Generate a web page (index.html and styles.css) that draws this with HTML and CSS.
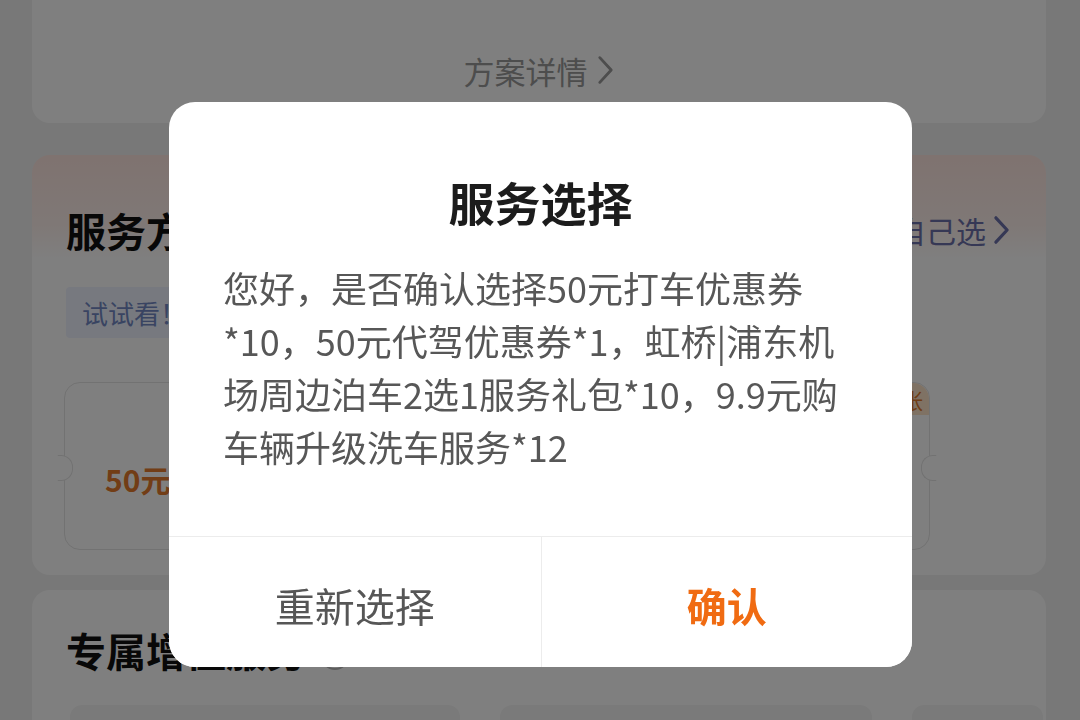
FILE: index.html
```html
<!DOCTYPE html>
<html lang="zh-CN">
<head>
  <meta charset="UTF-8">
  <meta name="viewport" content="width=device-width, initial-scale=1.0">
  <title>服务选择</title>
  <link rel="stylesheet" href="styles.css">
</head>
<body>
  <div class="page">
    <!-- Plan summary (scrolled up) -->
    <div class="plan-card">
      <a class="plan-link">方案详情
        <svg class="chevron" viewBox="0 0 20 32" width="19" height="32"><polyline points="4,3 16,16 4,29" fill="none" stroke="currentColor" stroke-width="3" stroke-linecap="round" stroke-linejoin="round"/></svg>
      </a>
    </div>

    <!-- Service plan -->
    <div class="card service-card">
      <div class="card-head">
        <h2>服务方案</h2>
        <a class="self-pick">自己选
          <svg class="chevron" viewBox="0 0 20 32" width="19" height="30"><polyline points="4,3 16,16 4,29" fill="none" stroke="currentColor" stroke-width="3.4" stroke-linecap="round" stroke-linejoin="round"/></svg>
        </a>
      </div>
      <div class="hint">试试看！</div>
      <div class="coupon-row">
        <div class="coupon">
          <span class="coupon-tag">张</span>
          <span class="coupon-name">50元</span>
        </div>
      </div>
    </div>

    <!-- Extra services -->
    <div class="card extra-card">
      <h2>专属增值服务 <span class="help">?</span></h2>
      <div class="extra-grid">
        <div class="extra-item"></div>
        <div class="extra-item"></div>
        <div class="extra-item"></div>
      </div>
    </div>
  </div>

  <div class="mask"></div>

  <div class="dialog">
    <div class="dialog-body">
      <h3>服务选择</h3>
      <p>您好，是否确认选择50元打车优惠券<br>*10，50元代驾优惠券*1，虹桥|浦东机<br>场周边泊车2选1服务礼包*10，9.9元购<br>车辆升级洗车服务*12</p>
    </div>
    <div class="dialog-actions">
      <button class="btn-reset">重新选择</button>
      <button class="btn-ok">确认</button>
    </div>
  </div>
</body>
</html>
```

FILE: styles.css
```css
body {
  margin: 0;
  height: 720px;
  overflow: hidden;
  background: #f1f1f1;
  font-family: "Noto Sans CJK SC", "Noto Sans", sans-serif;
}
.page {
  padding: 0 34px 0 32px;
}
.plan-card {
  height: 123px;
  background: #fff;
  border-radius: 0 0 18px 18px;
  display: flex;
  justify-content: center;
  box-sizing: border-box;
  padding-top: 49px;
}
.plan-link {
  display: flex;
  align-items: center;
  gap: 8px;
  height: 42px;
  font-size: 31px;
  color: #9a9a9a;
}
.card {
  background: #fff;
  border-radius: 18px;
}
.service-card {
  margin-top: 32px;
  padding: 47px 32px 25px;
  background: linear-gradient(180deg, #ffe6e0 0, #fff1ed 70px, #fff 105px);
}
.card-head {
  display: flex;
  justify-content: space-between;
  align-items: center;
  padding: 0 3px 0 2px;
}
.card h2 {
  margin: 0;
  font-size: 40px;
  line-height: 56px;
  font-weight: 700;
  color: #111;
}
.self-pick {
  display: flex;
  align-items: center;
  gap: 6px;
  font-size: 30px;
  color: #6c71aa;
}
.hint {
  display: inline-block;
  margin: 29px 0 0 2px;
  padding: 0 16px;
  height: 51px;
  line-height: 51px;
  font-size: 26px;
  color: #7389c4;
  background: #eef3ff;
  border-radius: 4px;
  min-width: 160px;
  box-sizing: border-box;
}
.coupon-row {
  margin-top: 44px;
}
.coupon {
  position: relative;
  width: 866px;
  height: 168px;
  box-sizing: border-box;
  border: 1px solid #e4e4e4;
  border-radius: 16px;
  display: flex;
  align-items: flex-end;
  padding: 0 0 48px 40px;
}
.coupon::before,
.coupon::after {
  content: "";
  position: absolute;
  top: 72px;
  width: 14px;
  height: 24px;
  background: #fff;
  border: 1px solid #e4e4e4;
}
.coupon::before {
  left: -8px;
  border-radius: 0 12px 12px 0;
  border-left-color: #fff;
}
.coupon::after {
  right: -8px;
  border-radius: 12px 0 0 12px;
  border-right-color: #fff;
}
.coupon-tag {
  position: absolute;
  top: 0;
  right: 0;
  height: 32px;
  line-height: 32px;
  padding: 0 6px 0 40px;
  font-size: 22px;
  color: #e07a2c;
  background: #ffe4c9;
  border-radius: 0 16px 0 12px;
}
.coupon-name {
  font-size: 30px;
  font-weight: 700;
  color: #e47b2c;
}
.extra-card {
  margin-top: 15px;
  padding: 32px 40px 0 34px;
  height: 130px;
  overflow: hidden;
}
.help {
  display: inline-block;
  width: 24px;
  height: 24px;
  line-height: 24px;
  margin-left: 6px;
  border: 2px solid #bbb;
  border-radius: 50%;
  font-size: 18px;
  color: #bbb;
  text-align: center;
  vertical-align: middle;
}
.extra-grid {
  margin-top: 27px;
  display: grid;
  grid-template-columns: 390px 372px 131px;
  gap: 28px 40px;
  margin-left: 4px;
}
.extra-item {
  height: 120px;
  background: #f5f5f5;
  border-radius: 12px;
}
.mask {
  position: fixed;
  inset: 0;
  background: rgba(0, 0, 0, 0.5);
}
.dialog {
  position: fixed;
  left: 169px;
  top: 102px;
  width: 743px;
  background: #fff;
  border-radius: 26px;
  overflow: hidden;
}
.dialog-body {
  height: 434px;
  box-sizing: border-box;
  padding: 68px 54px 0;
}
.dialog-body h3 {
  margin: 0;
  text-align: center;
  font-size: 46px;
  line-height: 62px;
  font-weight: 700;
  color: #1c1c1c;
}
.dialog-body p {
  margin: 29px 0 0;
  font-size: 36px;
  line-height: 53px;
  color: #575757;
  white-space: nowrap;
}
.dialog-actions {
  display: grid;
  grid-template-columns: 1fr 1fr;
  border-top: 1px solid #ececec;
}
.dialog-actions button {
  height: 130px;
  border: none;
  background: #fff;
  font-family: inherit;
  font-size: 40px;
  padding: 6px 0 0;
}
.btn-reset {
  color: #565656;
}
.btn-ok {
  color: #f06b12;
  font-weight: 700;
  border-left: 1px solid #ececec !important;
}
```
